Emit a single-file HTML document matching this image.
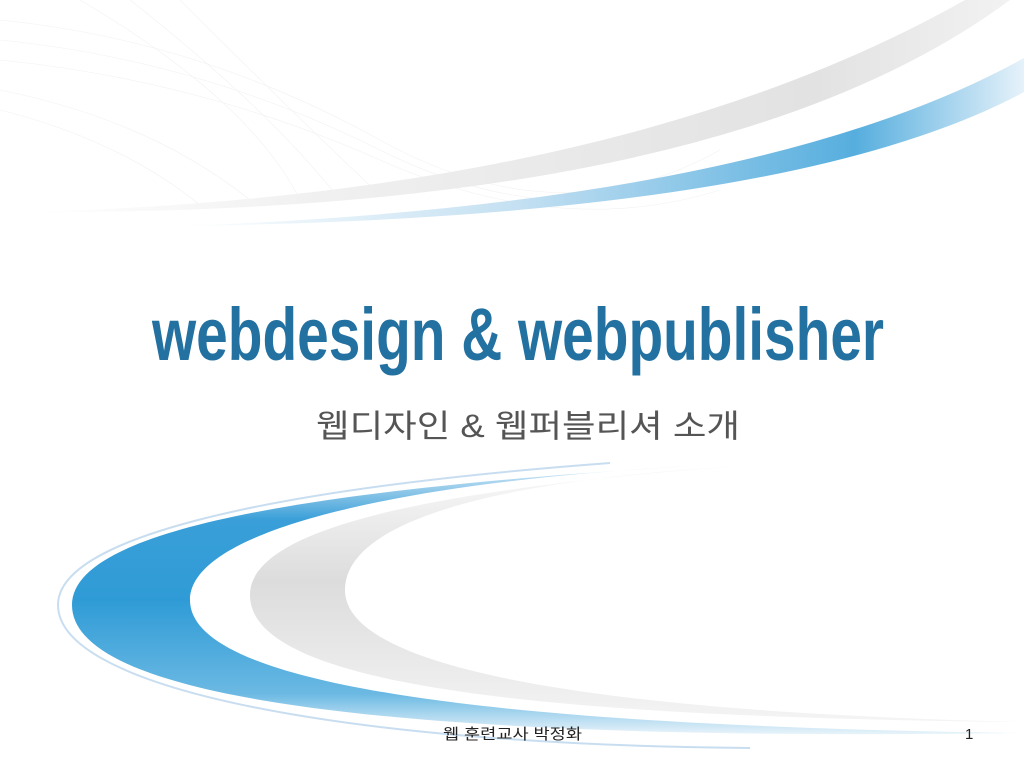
<!DOCTYPE html>
<html><head><meta charset="utf-8"><style>
html,body{margin:0;padding:0;background:#fff;width:1024px;height:768px;overflow:hidden}
</style></head><body>
<svg width="1024" height="768" viewBox="0 0 1024 768" xmlns="http://www.w3.org/2000/svg">
<defs>
<linearGradient id="gt" x1="0" y1="0" x2="1" y2="0">
<stop offset="0" stop-color="#fff"/><stop offset="0.3" stop-color="#f0f0f0"/><stop offset="0.8" stop-color="#e2e2e2"/><stop offset="1" stop-color="#f2f2f2"/></linearGradient>
<linearGradient id="bt" x1="0" y1="0" x2="1" y2="0">
<stop offset="0" stop-color="#fff"/><stop offset="0.4" stop-color="#c4e0f2"/><stop offset="0.8" stop-color="#56aede"/><stop offset="1" stop-color="#e6f2fa"/></linearGradient>
<linearGradient id="bb" x1="0" y1="0" x2="0" y2="1">
<stop offset="0" stop-color="#d8ebf7"/><stop offset="0.2" stop-color="#3a9fd8"/><stop offset="0.5" stop-color="#2f9bd6"/><stop offset="0.85" stop-color="#6bb9e3"/><stop offset="1" stop-color="#e8f3fa"/></linearGradient>
<linearGradient id="gb" x1="0" y1="0" x2="0" y2="1">
<stop offset="0" stop-color="#fafafa"/><stop offset="0.45" stop-color="#dcdcdc"/><stop offset="1" stop-color="#f4f4f4"/></linearGradient>
</defs>
<g stroke="#f2f2f2" stroke-width="0.6" fill="none">
<path d="M0,20 Q200,40 380,140 T720,150"/><path d="M0,40 Q200,60 380,150 T720,170"/>
<path d="M0,60 Q200,80 380,160 T720,190"/><path d="M80,0 Q250,100 300,200"/>
<path d="M130,0 Q270,110 340,200"/><path d="M180,0 Q300,120 380,195"/>
<path d="M0,90 Q150,120 250,200"/><path d="M0,110 Q120,140 200,205"/>
</g>
<path d="M30,212 Q620,195 965,0 L1010,0 Q720,215 30,212Z" fill="url(#gt)"/>
<path d="M180,226 Q760,205 1024,58 L1024,92 Q790,218 180,226Z" fill="url(#bt)"/>
<path d="M610,463 C250,490 58,540 58,605 C58,690 350,745 750,748" fill="none" stroke="#c8def0" stroke-width="2"/>
<path d="M690,466 C300,490 72,530 72,605 C72,700 400,742 1020,733 C450,725 190,680 190,600 C190,530 400,482 690,466Z" fill="url(#bb)"/>
<path d="M740,466 C420,490 250,530 250,595 C250,680 500,717 1024,722 C600,712 345,670 345,590 C345,520 500,480 740,466Z" fill="url(#gb)"/>
<text x="152" y="360" font-family="Liberation Sans, sans-serif" font-weight="bold" font-size="74" fill="#2371a1" textLength="732" lengthAdjust="spacingAndGlyphs">webdesign &amp; webpublisher</text>
<text x="316" y="437" font-family="Liberation Sans, Noto Sans CJK KR, sans-serif" font-size="32" fill="#555" textLength="424" lengthAdjust="spacingAndGlyphs">웹디자인 &amp; 웹퍼블리셔 소개</text>
<text x="443" y="739" font-family="Liberation Sans, Noto Sans CJK KR, sans-serif" font-size="15" fill="#222" textLength="139" lengthAdjust="spacingAndGlyphs">웹 훈련교사 박정화</text>
<text x="965" y="739" font-family="Liberation Sans, sans-serif" font-size="15" fill="#222">1</text>
</svg>
</body></html>
